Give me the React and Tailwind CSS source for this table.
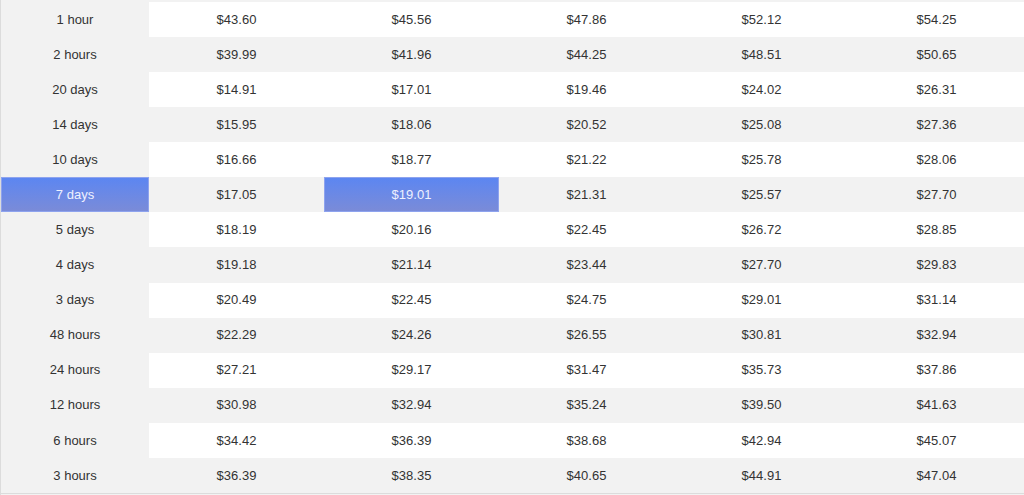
import React from "react";

const rows = [
  ["1 hour", "$43.60", "$45.56", "$47.86", "$52.12", "$54.25"],
  ["2 hours", "$39.99", "$41.96", "$44.25", "$48.51", "$50.65"],
  ["20 days", "$14.91", "$17.01", "$19.46", "$24.02", "$26.31"],
  ["14 days", "$15.95", "$18.06", "$20.52", "$25.08", "$27.36"],
  ["10 days", "$16.66", "$18.77", "$21.22", "$25.78", "$28.06"],
  ["7 days", "$17.05", "$19.01", "$21.31", "$25.57", "$27.70"],
  ["5 days", "$18.19", "$20.16", "$22.45", "$26.72", "$28.85"],
  ["4 days", "$19.18", "$21.14", "$23.44", "$27.70", "$29.83"],
  ["3 days", "$20.49", "$22.45", "$24.75", "$29.01", "$31.14"],
  ["48 hours", "$22.29", "$24.26", "$26.55", "$30.81", "$32.94"],
  ["24 hours", "$27.21", "$29.17", "$31.47", "$35.73", "$37.86"],
  ["12 hours", "$30.98", "$32.94", "$35.24", "$39.50", "$41.63"],
  ["6 hours", "$34.42", "$36.39", "$38.68", "$42.94", "$45.07"],
  ["3 hours", "$36.39", "$38.35", "$40.65", "$44.91", "$47.04"],
];

const hl =
  "bg-gradient-to-b from-[#5c86f1] to-[#7a8bd8] text-[#eef1ff] border border-[#8ea3ee]";

export default function App() {
  return (
    <div
      className="w-[1024px] h-[495px] bg-[#f2f2f2] pt-[2px] border-l border-[#dcdcdc] overflow-hidden"
      style={{ fontFamily: '"Liberation Sans", Arial, sans-serif' }}
    >
      <div className="grid grid-cols-[148px_repeat(5,175px)] border-b border-[#dcdcdc] text-[13px] text-[#333]">
        {rows.map((r, i) => {
          const even = i % 2 === 0;
          const sel = i === 5;
          return (
            <React.Fragment key={i}>
              <div
                className={`h-[35.07px] flex items-center justify-center ${
                  sel ? hl : "bg-[#f2f2f2]"
                }`}
              >
                {r[0]}
              </div>
              {r.slice(1).map((v, j) => (
                <div
                  key={j}
                  className={`h-[35.07px] flex items-center justify-center ${
                    sel && j === 1 ? hl : even ? "bg-white" : "bg-[#f2f2f2]"
                  }`}
                >
                  {v}
                </div>
              ))}
            </React.Fragment>
          );
        })}
      </div>
    </div>
  );
}
